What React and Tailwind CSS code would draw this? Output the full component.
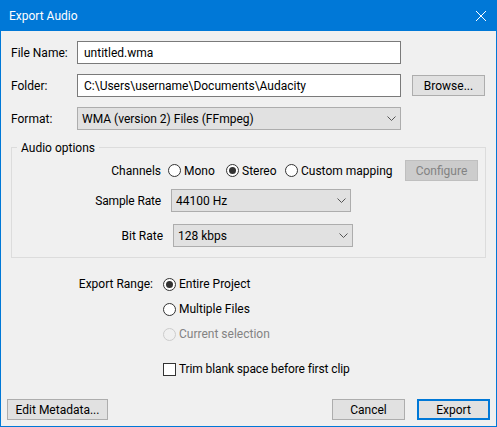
import React from "react";

function Radio({ label, checked, disabled }) {
  return (
    <label className={`flex items-center gap-[3px] ${disabled ? "text-[#838383]" : "text-black"}`}>
      <span className={`flex h-[13px] w-[13px] items-center justify-center rounded-full border ${disabled ? "border-[#cccccc] bg-[#f0f0f0]" : "border-[#333333] bg-white"}`}>
        {checked && <span className="h-[7px] w-[7px] rounded-full bg-[#333333]" />}
      </span>
      {label}
    </label>
  );
}

function Dropdown({ value, width }) {
  return (
    <div className={`relative h-[23px] ${width}`}>
      <select
        defaultValue={value}
        className="h-full w-full appearance-none border border-[#adadad] bg-[#e1e1e1] pl-[4px] text-black outline-none"
      >
        <option>{value}</option>
      </select>
      <svg className="pointer-events-none absolute right-[5px] top-[9px]" width="9" height="5" viewBox="0 0 9 5" fill="none">
        <path d="M0.5 0.5L4.5 4.5L8.5 0.5" stroke="#555555" strokeWidth="1" />
      </svg>
    </div>
  );
}

function Button({ children, className = "" }) {
  return (
    <button className={`flex h-[21px] items-center justify-center border border-[#adadad] bg-[#e1e1e1] text-black ${className}`}>
      {children}
    </button>
  );
}

function TextField({ value }) {
  return (
    <input
      readOnly
      defaultValue={value}
      className="h-[23px] w-[324px] border border-[#7a7a7a] bg-white pl-[6px] text-black outline-none"
    />
  );
}

export default function App() {
  return (
    <div
      className="flex h-[427px] w-[497px] flex-col border-x border-b border-[#0078d7] bg-[#f0f0f0] text-[12px] leading-[16px] text-black"
      style={{ fontFamily: 'Roboto, sans-serif' }}
    >
      <header className="flex h-[31px] shrink-0 items-center justify-between bg-[#0078d7] pl-[8px] pr-[10px] text-white">
        <span>Export Audio</span>
        <svg width="10" height="10" viewBox="0 0 10 10" fill="none">
          <path d="M0 0L10 10M10 0L0 10" stroke="white" strokeWidth="1" />
        </svg>
      </header>

      <section className="flex flex-col gap-[10px] pl-[10px] pt-[10px]">
        <div className="flex items-center">
          <span className="w-[66px]">File Name:</span>
          <TextField value="untitled.wma" />
        </div>
        <div className="flex items-center">
          <span className="w-[66px]">Folder:</span>
          <TextField value="C:\Users\username\Documents\Audacity" />
          <Button className="ml-[11px] w-[73px]">Browse...</Button>
        </div>
        <div className="flex items-center">
          <span className="w-[66px]">Format:</span>
          <Dropdown value="WMA (version 2) Files (FFmpeg)" width="w-[324px]" />
        </div>
      </section>

      <section className="relative ml-[10px] mt-[17px] h-[111px] w-[475px] border border-[#dcdcdc] pt-[12px]">
        <span className="absolute left-[5px] top-[-8px] bg-[#f0f0f0] px-[4px]">Audio options</span>
        <div className="flex h-[21px] items-center">
          <span className="w-[149px] text-right">Channels</span>
          <div className="ml-[7px] flex w-[237px] items-center">
            <div className="w-[58px]"><Radio label="Mono" /></div>
            <div className="w-[59px]"><Radio label="Stereo" checked /></div>
            <Radio label="Custom mapping" />
          </div>
          <Button className="!border-[#bfbfbf] !bg-[#cccccc] !text-[#838383] w-[73px]">Configure</Button>
        </div>
        <div className="mt-[8px] flex items-center">
          <span className="w-[149px] text-right tracking-[-0.15px]">Sample Rate</span>
          <div className="ml-[10px]"><Dropdown value="44100 Hz" width="w-[180px]" /></div>
        </div>
        <div className="mt-[12px] flex items-center">
          <span className="w-[151px] text-right">Bit Rate</span>
          <div className="ml-[10px]"><Dropdown value="128 kbps" width="w-[180px]" /></div>
        </div>
      </section>

      <section className="mt-[16px] flex pl-[10px]">
        <span className="flex h-[20px] w-[142px] items-center justify-end">Export Range:</span>
        <div className="ml-[10px] flex flex-col">
          <div className="flex h-[20px] items-center"><Radio label="Entire Project" checked /></div>
          <div className="mt-[5px] flex h-[20px] items-center"><Radio label="Multiple Files" /></div>
          <div className="mt-[5px] flex h-[20px] items-center"><Radio label="Current selection" disabled /></div>
          <label className="mt-[15px] flex h-[20px] items-center gap-[3px] tracking-[-0.12px]">
            <span className="h-[13px] w-[13px] border border-[#333333] bg-white" />
            Trim blank space before first clip
          </label>
        </div>
      </section>

      <footer className="mt-auto flex items-center px-[6px] pb-[6px]">
        <Button className="w-[101px]">Edit Metadata...</Button>
        <Button className="ml-auto w-[73px]">Cancel</Button>
        <Button className="ml-[12px] w-[73px] !border-2 !border-[#0078d7]">Export</Button>
      </footer>
    </div>
  );
}
